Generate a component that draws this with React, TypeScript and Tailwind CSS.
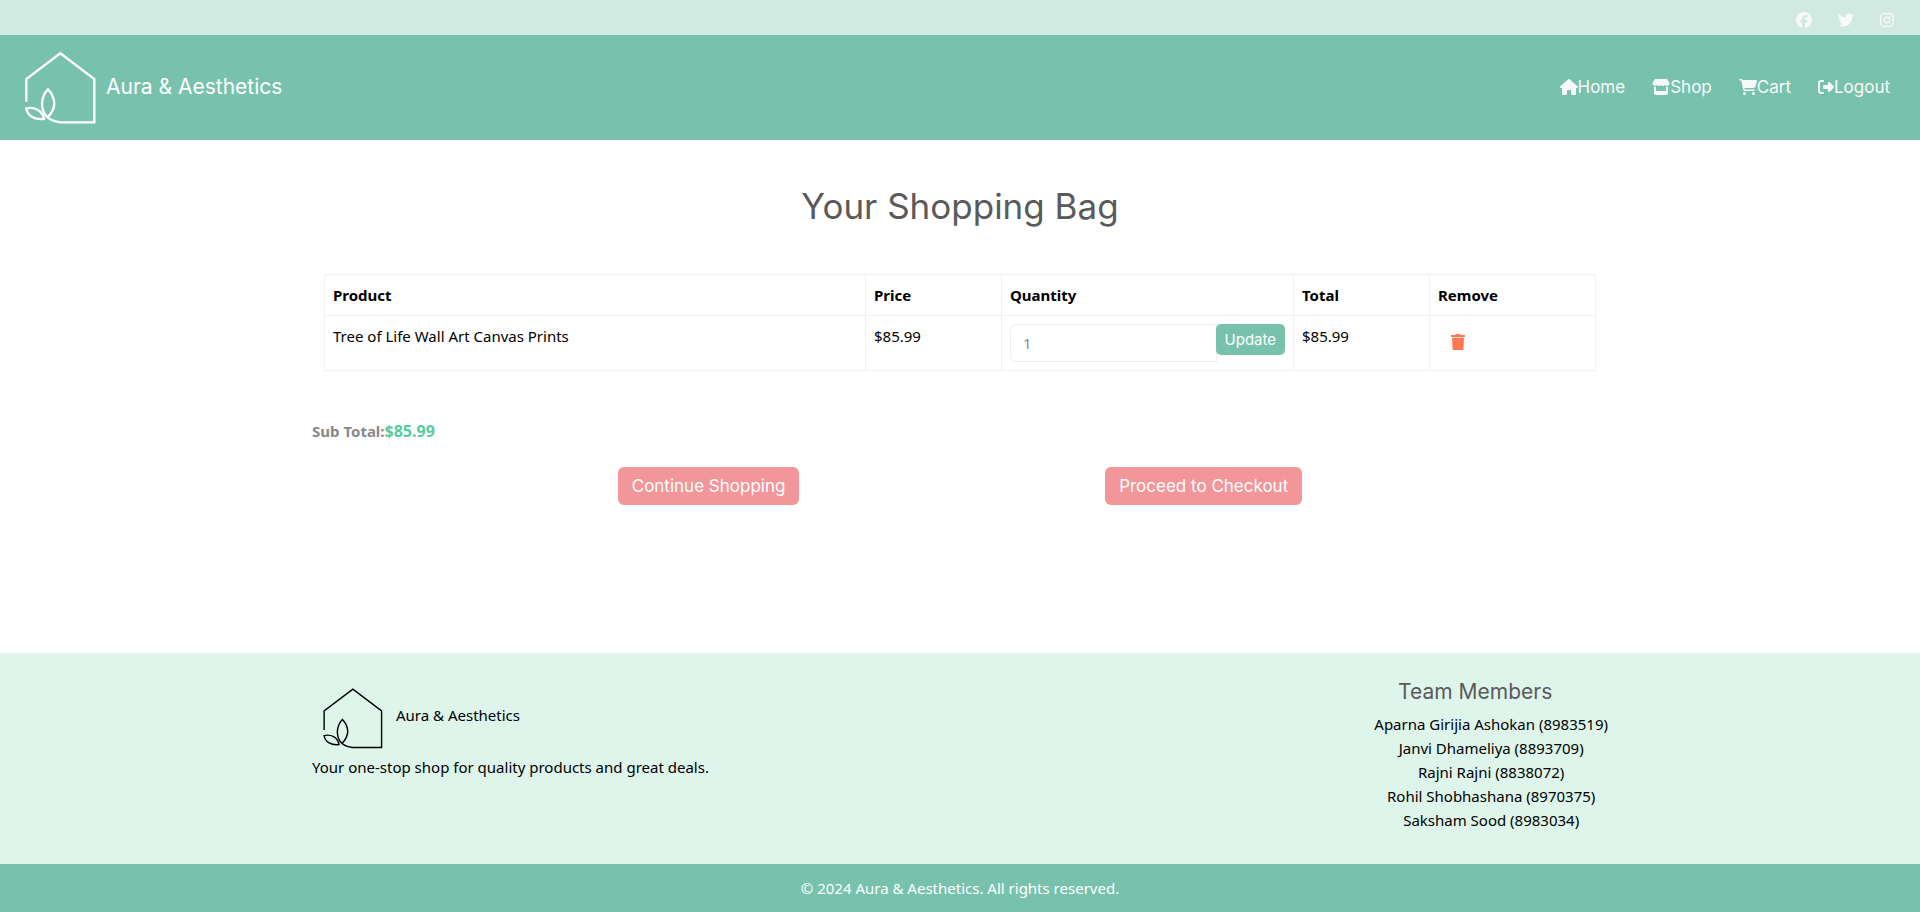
import { useState } from "react";
import {
  FaFacebook,
  FaTwitter,
  FaInstagram,
  FaHouse,
  FaStore,
  FaCartShopping,
  FaRightFromBracket,
} from "react-icons/fa6";

const socials = [
  { label: "Facebook", Icon: FaFacebook, size: "h-4 w-4" },
  { label: "Twitter", Icon: FaTwitter, size: "h-4 w-4" },
  { label: "Instagram", Icon: FaInstagram, size: "h-4 w-[14px]" },
];

const links = [
  { label: "Home", Icon: FaHouse, size: "h-4 w-[18px]" },
  { label: "Shop", Icon: FaStore, size: "h-4 w-[18px]" },
  { label: "Cart", Icon: FaCartShopping, size: "h-4 w-[18px]" },
  { label: "Logout", Icon: FaRightFromBracket, size: "h-4 w-4" },
];

const team = [
  "Aparna Girijia Ashokan (8983519)",
  "Janvi Dhameliya (8893709)",
  "Rajni Rajni (8838072)",
  "Rohil Shobhashana (8970375)",
  "Saksham Sood (8983034)",
];

function Logo({ className, stroke }: { className: string; stroke: number }) {
  return (
    <svg
      viewBox="75 153 213 219"
      fill="none"
      stroke="currentColor"
      strokeWidth={stroke}
      className={className}
      aria-hidden="true"
    >
      <path d="M79 305V237L181 160L283 237V367H180C148 363 126 345 126 310C127 294 133 279 144 268C155 279 162 294 163 310C162 326 155 340 144 350" />
      <path d="M79 325C103 319 127 331 132 357C105 360 82 348 79 325Z" />
    </svg>
  );
}

function TrashIcon() {
  return (
    <svg viewBox="0 0 14 16" fill="currentColor" className="h-4 w-[14px]" aria-hidden="true">
      <path d="M4.8 0h4.4l.6 1H13.5a.5.5 0 0 1 .5.5V3H0V1.5A.5.5 0 0 1 .5 1H4.2z" />
      <path d="M1 3.7h12l-.5 11.4a.9.9 0 0 1-.9.9H2.4a.9.9 0 0 1-.9-.9z" />
    </svg>
  );
}

const cell = "border border-[#f0f1f2] p-2 text-left align-top";

export default function App() {
  const [quantity, setQuantity] = useState("1");

  return (
    <div className="flex min-h-screen flex-col bg-white font-['Noto_Sans',sans-serif] text-[15px] leading-6 text-black">
      <div className="flex h-[35px] items-end justify-end gap-[26px] bg-[#d0eae1] pr-[26px] pb-[7px] text-[#f8f9fa]">
        {socials.map(({ label, Icon, size }) => (
          <a key={label} href="#" aria-label={label}>
            <Icon className={size} />
          </a>
        ))}
      </div>

      <header className="flex h-[105px] items-center justify-between bg-[#78c2ad] pr-[30px] pl-[25px] font-['Inter',sans-serif] text-[#f8f9fa]">
        <a href="#" className="flex items-center gap-[10px] text-[21px] text-white">
          <Logo className="h-[73px] w-[71px]" stroke={7} />
          <span className="pb-0.5">Aura &amp; Aesthetics</span>
        </a>
        <nav className="flex gap-[27px] pb-0.5 text-[17px]">
          {links.map(({ label, Icon, size }) => (
            <a key={label} href="#" className="flex items-center">
              <Icon className={size} />
              {label}
            </a>
          ))}
        </nav>
      </header>

      <main className="mx-auto w-full max-w-[1320px] grow px-3">
        <h2 className="mt-12 text-center font-['Inter',sans-serif] text-[35px] leading-9 text-[#5a5a5a]">
          Your Shopping Bag
        </h2>

        <div className="mt-[50px] px-3">
          <table className="w-full table-fixed border-collapse">
            <colgroup>
              <col />
              <col className="w-[136px]" />
              <col className="w-[292px]" />
              <col className="w-[136px]" />
              <col className="w-[166px]" />
            </colgroup>
            <thead>
              <tr>
                <th className={cell}>Product</th>
                <th className={cell}>Price</th>
                <th className={cell}>Quantity</th>
                <th className={cell}>Total</th>
                <th className={cell}>Remove</th>
              </tr>
            </thead>
            <tbody>
              <tr>
                <td className={cell}>Tree of Life Wall Art Canvas Prints</td>
                <td className={cell}>$85.99</td>
                <td className={cell}>
                  <form className="flex items-start" onSubmit={(e) => e.preventDefault()}>
                    <input
                      aria-label="Quantity"
                      value={quantity}
                      onChange={(e) => setQuantity(e.target.value)}
                      className="h-[38px] min-w-0 grow rounded-l-md border border-[#eceeef] px-3 text-[15px] text-[#888888]"
                    />
                    <button className="-ml-px h-[31px] shrink-0 rounded-[5px] bg-[#78c2ad] px-[9px] font-['Inter',sans-serif] text-[15px] text-white">
                      Update
                    </button>
                  </form>
                </td>
                <td className={cell}>$85.99</td>
                <td className={cell}>
                  <button aria-label="Remove item" className="block px-[13px] py-[10px] text-[#ff7851]">
                    <TrashIcon />
                  </button>
                </td>
              </tr>
            </tbody>
          </table>
        </div>

        <p className="mt-12 font-bold text-[#888888]">
          Sub Total:<span className="text-[16px] text-[#56cc9d]">$85.99</span>
        </p>

        <div className="mt-6 flex justify-evenly font-['Inter',sans-serif] text-[17px] text-white">
          <button className="h-[38px] rounded-md bg-[#f3969a] px-[14px]">Continue Shopping</button>
          <button className="h-[38px] rounded-md bg-[#f3969a] px-[14px]">Proceed to Checkout</button>
        </div>
      </main>

      <footer>
        <div className="bg-[#def5eb]">
          <div className="mx-auto flex h-[211px] w-full max-w-[1320px] justify-between px-3 pt-6">
            <div>
              <div className="flex h-[78px] items-center gap-[13px] pl-[11px]">
                <Logo className="mt-1 h-[62px] w-[60px]" stroke={5} />
                <span className="pb-0.5">Aura &amp; Aesthetics</span>
              </div>
              <p>Your one-stop shop for quality products and great deals.</p>
            </div>
            <div className="text-center">
              <h5 className="mt-[3px] mb-2 font-['Inter',sans-serif] text-[21px] text-[#5a5a5a]">
                Team Members
              </h5>
              <ul className="pl-8">
                {team.map((name) => (
                  <li key={name}>{name}</li>
                ))}
              </ul>
            </div>
          </div>
        </div>
        <p className="bg-[#78c2ad] py-3 text-center text-white">
          © 2024 Aura &amp; Aesthetics. All rights reserved.
        </p>
      </footer>
    </div>
  );
}
